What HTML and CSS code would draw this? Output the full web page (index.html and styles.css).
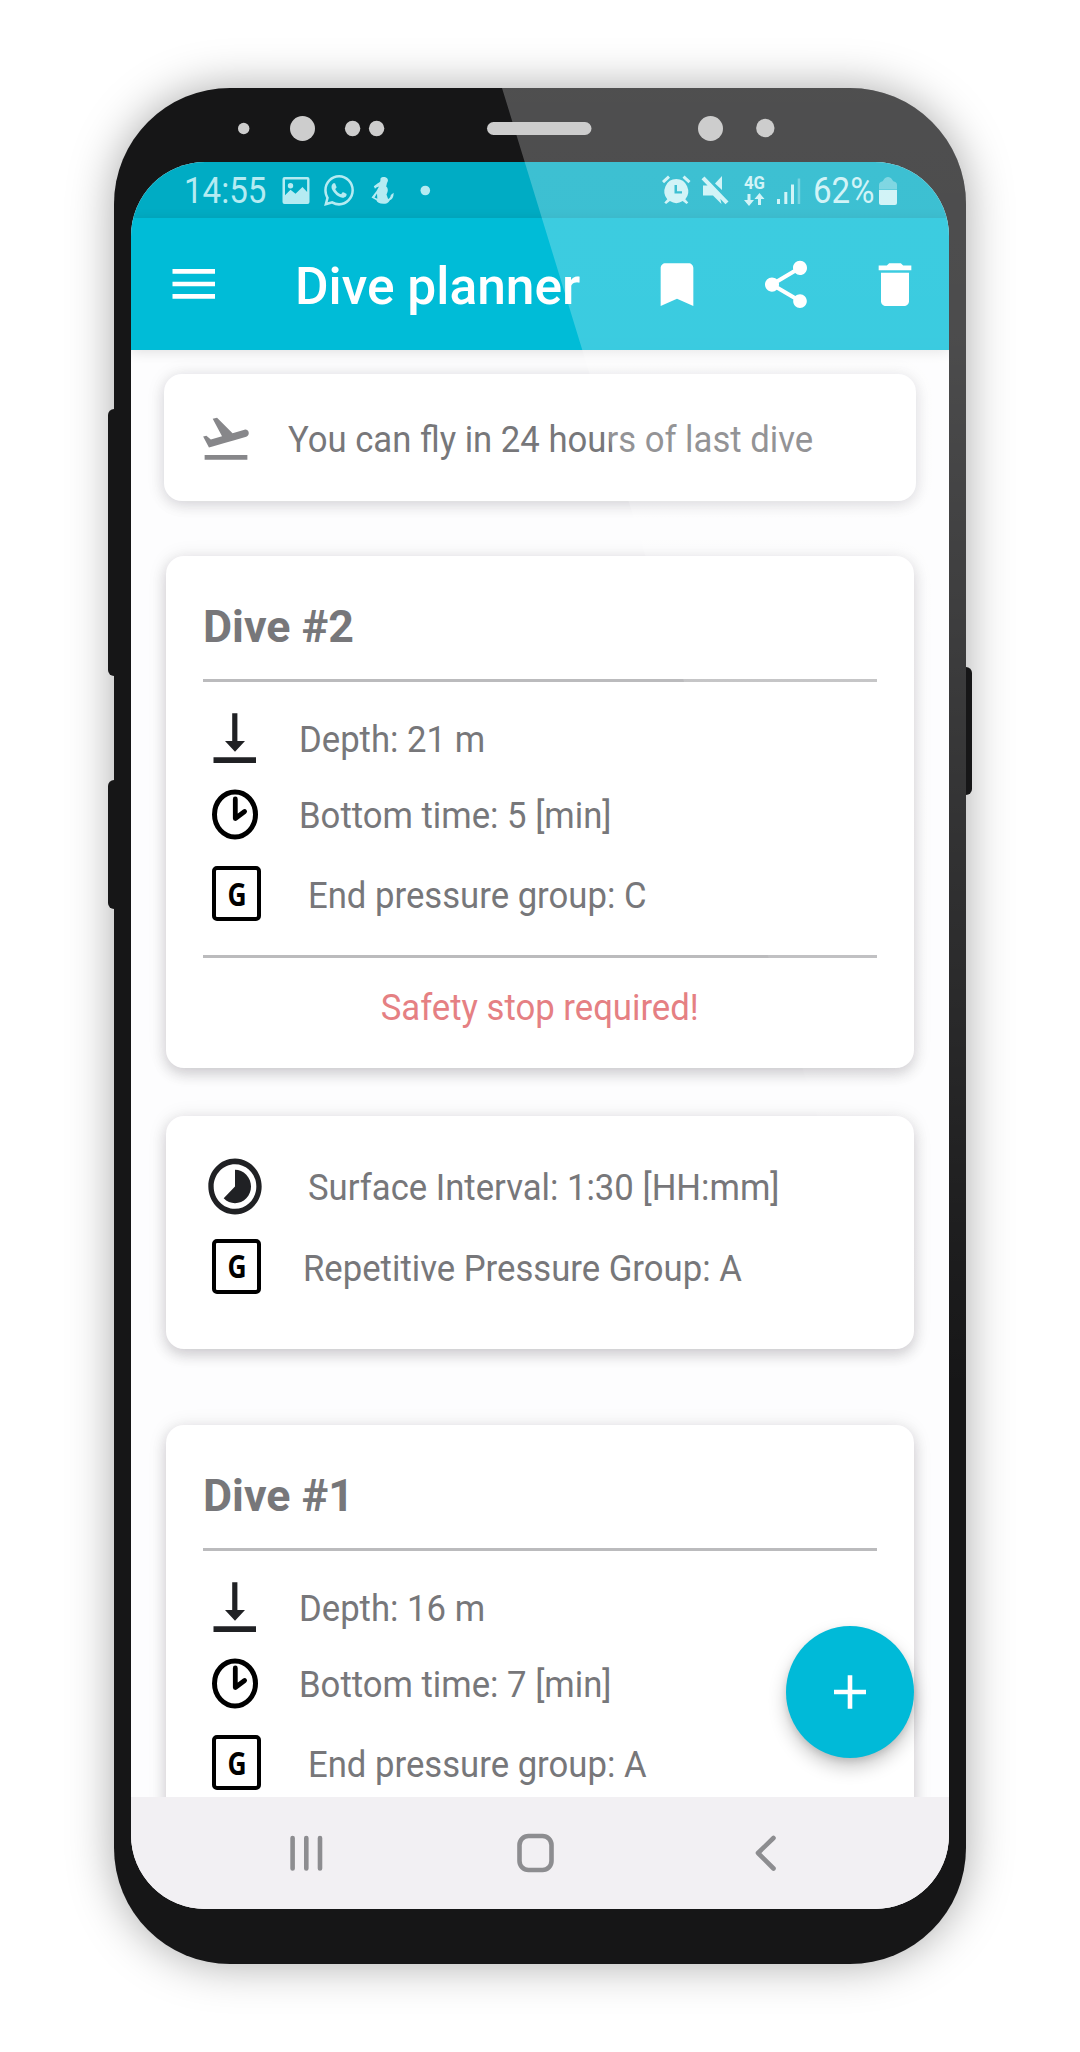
FILE: index.html
```html
<!DOCTYPE html>
<html lang="en">
<head>
<meta charset="utf-8">
<title>Dive planner</title>
<link rel="stylesheet" href="styles.css">
</head>
<body>
<svg class="defs" width="0" height="0" aria-hidden="true">
  <symbol id="depth" viewBox="203 708 64 60"><path fill="#202124" d="M232.2 713.3h5.2V741h7.6l-10 10.8-10-10.8h7.2zM213.5 757.3H256v5.7h-42.500z"/></symbol>
  <symbol id="clock" viewBox="203 783 64 60"><ellipse cx="235" cy="813.4" rx="20.500" ry="22.500" fill="none" stroke="#000" stroke-width="5"/><path d="M235.300 798v19.500l9.300-7" fill="none" stroke="#000" stroke-width="4.800" stroke-linecap="round" stroke-linejoin="round"/></symbol>
</svg>
<main class="phone">
  <i class="key volume"></i><i class="key assistant"></i><i class="key power"></i>
  <header class="sensors">
    <svg width="852" height="74" viewBox="114 88 852 74" fill="#cdcdcd"><circle cx="243.700" cy="128.500" r="5.700"/><circle cx="302.500" cy="128.500" r="12.500"/><circle cx="352.600" cy="128.500" r="7.700"/><circle cx="376.600" cy="128.500" r="7.700"/><rect x="487" y="122" width="104.500" height="13" rx="6.500"/><circle cx="710.500" cy="128.500" r="12.500"/><circle cx="765.300" cy="128" r="9.200"/></svg>
  </header>
  <div class="screen">
    <div class="statusbar">
      <span class="txt time">14:55</span>
      <svg class="st-icons-left" width="160" height="34" viewBox="282 173 160 34" fill="#b5ebf2">
        <path fill-rule="evenodd" d="M284.500 177h23a2 2 0 0 1 2 2v23a2 2 0 0 1-2 2h-23a2 2 0 0 1-2-2v-23a2 2 0 0 1 2-2zM285 179.500v15.800l5.500-5.500 5 4 7-6.800 4.600 5v-12.500zM290.500 183a2.700 2.700 0 1 1 0 5.400 2.700 2.700 0 0 1 0-5.400z"/>
        <g transform="translate(324 175) scale(1.25 1.290)"><path d="M17.472 14.382c-.297-.149-1.758-.867-2.03-.967-.273-.099-.471-.148-.67.15-.197.297-.767.966-.94 1.164-.173.199-.347.223-.644.075-.297-.15-1.255-.463-2.39-1.475-.883-.788-1.48-1.761-1.653-2.059-.173-.297-.018-.458.13-.606.134-.133.298-.347.446-.52.149-.174.198-.298.298-.497.099-.198.05-.371-.025-.52-.075-.149-.669-1.612-.916-2.207-.242-.579-.487-.5-.669-.51-.173-.008-.371-.01-.57-.01-.198 0-.52.074-.792.372-.272.297-1.04 1.016-1.04 2.479 0 1.462 1.065 2.875 1.213 3.074.149.198 2.096 3.2 5.077 4.487.709.306 1.262.489 1.694.625.712.227 1.36.195 1.871.118.571-.085 1.758-.719 2.006-1.413.248-.694.248-1.289.173-1.413-.074-.124-.272-.198-.57-.347m-5.421 7.403h-.004a9.87 9.87 0 01-5.031-1.378l-.361-.214-3.741.982.998-3.648-.235-.374a9.86 9.86 0 01-1.51-5.26c.001-5.45 4.436-9.884 9.888-9.884 2.64 0 5.122 1.03 6.988 2.898a9.825 9.825 0 012.893 6.994c-.003 5.45-4.437 9.884-9.885 9.884m8.413-18.297A11.815 11.815 0 0012.05 0C5.495 0 .16 5.335.157 11.892c0 2.096.547 4.142 1.588 5.945L.057 24l6.305-1.654a11.882 11.882 0 005.683 1.448h.005c6.554 0 11.89-5.335 11.893-11.893a11.821 11.821 0 00-3.48-8.413Z"/></g>
        <path d="M380.500 178.500c1.500-1.800 5.500-2 7 .3 1 1.600.2 3.200-.5 4.200l-.8 3.500c1.600 1.200 2 3.500 1.300 5.500l-1 2.500 1.600 4.500c1.500-.5 2.500-2 2.700-4l2.900-2.200-.3 3c-.5 2-1.500 3.600-3.500 4.500-1.500 3-4 3.500-6.500 3.500-4 0-6.300-1.200-7-3.500l-4.900-2.800 5-6.500 2.500-4.500c-1.500.5-3 1-4 2.300l-1.200-2.500 4-3c1.500-1 2.200-1.200 2.500-2zM377 193.500l-2.500 4 2.800 1.200z" fill-rule="evenodd"/>
        <circle cx="425.300" cy="190.500" r="4.800"/>
      </svg>
      <span class="spacer"></span>
      <svg class="st-icons-right" width="144" height="34" viewBox="659 173 144 34" fill="#c4f0f5">
        <path d="M661 181l6-5.500 2 2.200-6 5.500zM689.500 181l-6-5.500-2 2.200 6 5.500z"/>
        <path fill-rule="evenodd" d="M675.300 179a12 12.300 0 0 1 9 20.300l3 3.200-1.800 1.600-3.800-3a11.500 11.500 0 0 1-12.800 0l-3.800 3-1.800-1.600 3-3.200a12 12.300 0 0 1 9-20.300zm-1.800 6v8.500h7.500v-2.300h-5V185z"/>
        <path d="M702 185.500h6l11 12 1.500 6.500-8.500-8.500h-10zM721 176v14l-7-6.500zM703.500 176.500l24 25-3 2.700-24-25z"/>
        <path d="M746.500 194h3v6h3.500l-5 6-5-6h3.500zM757 205v-6h-3.500l5-6 5 6h-3.500v6z"/>
        <path d="M776 199h3v5h-3zM783.300 192h3v12h-3zM790 184.500h3V204h-3z"/><path opacity=".4" d="M796.700 178.500h2.500V204h-2.500z"/>
        <text class="net" x="743" y="189" textLength="21" lengthAdjust="spacingAndGlyphs">4G</text>
      </svg>
      <span class="txt battery">62%</span>
      <svg class="cell" width="20" height="30" viewBox="878 174 20 30" fill="#c4f0f5"><path opacity=".45" d="M879 188v-4c0-2 1-3 3-3.500 2-.5 2-4.500 6-4.500s4 4 6 4.500 3 1.500 3 3.500v4z"/><path d="M879 188.700h18V202a2 2 0 0 1-2 2h-14a2 2 0 0 1-2-2z"/></svg>
    </div>
    <nav class="appbar">
      <svg class="menu" width="44" height="32" viewBox="0 0 44 32" fill="#fff"><path d="M.5 1H43v4.700H.5zM.5 13.700H43v4.600H.5zM.5 26H43v4.700H.5z"/></svg>
      <h1 class="txt">Dive planner</h1>
      <span class="spacer"></span>
      <svg class="action" viewBox="0 0 24 24" preserveAspectRatio="none"><path d="M17 3H7c-1.100 0-2 .9-2 2v16l7-3 7 3V5c0-1.100-.9-2-2-2z"/></svg>
      <svg class="action" viewBox="0 0 24 24" preserveAspectRatio="none"><path d="M18 16.080c-.76 0-1.440.3-1.960.77L8.910 12.700c.05-.23.09-.46.09-.7s-.04-.47-.09-.7l7.050-4.110c.54.5 1.250.81 2.040.81 1.660 0 3-1.340 3-3s-1.340-3-3-3-3 1.340-3 3c0 .24.04.47.09.7L8.040 9.810C7.500 9.310 6.790 9 6 9c-1.660 0-3 1.340-3 3s1.340 3 3 3c.79 0 1.500-.31 2.040-.81l7.120 4.160c-.05.21-.08.43-.08.65 0 1.610 1.310 2.920 2.920 2.920s2.920-1.310 2.920-2.920-1.310-2.920-2.920-2.920z"/></svg>
      <svg class="action" viewBox="0 0 24 24" preserveAspectRatio="none"><path d="M6 19c0 1.100.9 2 2 2h8c1.100 0 2-.9 2-2V7H6v12zM19 4h-3.500l-1-1h-5l-1 1H5v2h14V4z"/></svg>
    </nav>
    <div class="content">
      <section class="card fly">
        <svg width="54" height="58" viewBox="0 0 24 24" preserveAspectRatio="none" fill="#87878a"><path d="M2.500 19h19v2h-19zM22.070 9.640c-.21-.8-1.040-1.280-1.840-1.060L14.920 10l-6.900-6.430-1.930.51 4.140 7.170-4.970 1.330-1.970-1.540-1.450.39 1.820 3.160.77 1.330 1.600-.43 5.310-1.420 4.350-1.160L21 11.490c.81-.23 1.280-1.050 1.070-1.850z"/></svg>
        <span class="txt">You can fly in 24 hours of last dive</span>
      </section>
      <section class="card dive">
        <h2><span class="txt">Dive #2</span></h2>
        <div class="rows">
          <div class="row"><svg width="64" height="60"><use href="#depth"/></svg><span class="txt">Depth: 21 m</span></div>
          <div class="row"><svg width="64" height="60"><use href="#clock"/></svg><span class="txt">Bottom time: 5 [min]</span></div>
          <div class="row group"><span class="gbox"><b class="txt">G</b></span><span class="txt label">End pressure group: C</span></div>
        </div>
        <p class="warning"><span class="txt">Safety stop required!</span></p>
      </section>
      <section class="card surface">
        <div class="row interval"><svg width="64" height="67" viewBox="0 0 24 24" preserveAspectRatio="none" fill="#202124"><path d="M16.240 7.760C15.070 6.590 13.540 6 12 6v6l-4.240 4.240c2.340 2.340 6.140 2.340 8.490 0 2.340-2.340 2.340-6.140-.01-8.480zM12 2C6.480 2 2 6.480 2 12s4.480 10 10 10 10-4.480 10-10S17.520 2 12 2zm0 18c-4.420 0-8-3.580-8-8s3.580-8 8-8 8 3.580 8 8-3.580 8-8 8z"/></svg><span class="txt">Surface Interval: 1:30 [HH:mm]</span></div>
        <div class="row group rep"><span class="gbox"><b class="txt">G</b></span><span class="txt label">Repetitive Pressure Group: A</span></div>
      </section>
      <section class="card dive last">
        <h2><span class="txt">Dive #1</span></h2>
        <div class="rows">
          <div class="row"><svg width="64" height="60"><use href="#depth"/></svg><span class="txt">Depth: 16 m</span></div>
          <div class="row"><svg width="64" height="60"><use href="#clock"/></svg><span class="txt">Bottom time: 7 [min]</span></div>
          <div class="row group"><span class="gbox"><b class="txt">G</b></span><span class="txt label">End pressure group: A</span></div>
        </div>
      </section>
      <button class="fab" aria-label="Add dive"><svg width="34" height="34" viewBox="0 0 34 34"><path d="M1 17h32M17 .3v33.400" stroke="#fff" stroke-width="4.600"/></svg></button>
    </div>
    <footer class="navbar">
      <svg width="33" height="38" viewBox="0 0 33 38"><path d="M2.600 4v30.500M16.300 4v30.500M30 4v30.500"/></svg>
      <svg width="37" height="40" viewBox="0 0 37 40"><rect x="2.500" y="3" width="32" height="34" rx="9"/></svg>
      <svg width="22" height="38" viewBox="0 0 22 38"><path d="M18.500 4L3 19l15.500 15.500" stroke-linejoin="round"/></svg>
    </footer>
  </div>
  <div class="glare"></div>
</main>
</body>
</html>
```
FILE: styles.css
```css
* { box-sizing: border-box; }
body { margin: 0; height: 2052px; overflow: hidden; background: #fff; font-family: Roboto, sans-serif; color: #77777a; }
h1, h2, p { margin: 0; }
.defs { position: absolute; }
.txt { display: inline-block; white-space: nowrap; transform: scaleX(.948); transform-origin: 0 50%; }
.spacer { flex: 1; }

.phone { position: relative; width: 852px; height: 1876px; margin: 88px 114px; border-radius: 116px; background: #161617; box-shadow: 0 0 46px rgba(0,0,0,.34); }
.sensors { height: 74px; position: relative; z-index: 3; }
.key { position: absolute; width: 8px; background: #161617; }
.volume { left: -6px; top: 321px; height: 267px; border-radius: 6px 0 0 6px; }
.assistant { left: -6px; top: 692px; height: 129px; border-radius: 6px 0 0 6px; }
.power { right: -6px; top: 579px; height: 128px; border-radius: 0 6px 6px 0; }
.glare { position: absolute; z-index: 2; inset: 0; border-radius: 116px; clip-path: polygon(388px 0, 100% 0, 100% 100%, 963px 100%); background: linear-gradient(rgba(255,255,255,.245) 0, rgba(255,255,255,.23) 250px, rgba(255,255,255,0) 1300px); pointer-events: none; }

.screen { width: 818px; height: 1747px; margin: 0 17px; border-radius: 74px; overflow: hidden; display: flex; flex-direction: column; background: #fdfdfe; }
.statusbar { height: 56px; flex: none; background: #00acc4; display: flex; align-items: center; padding-left: 53px; color: #b5ebf2; font-size: 36px; line-height: 42px; }
.statusbar svg { flex: none; }
.statusbar .txt { transform: scaleX(.92); margin-top: 2px; }
.time { width: 98px; }
.battery { width: 65px; color: #c4f0f5; }
.st-icons-right { margin-right: 9px; }
.cell { margin-right: 51px; }
.net { font: 700 18px Roboto, sans-serif; }
.appbar { height: 132px; flex: none; background: #00bcd7; display: flex; align-items: center; color: #fff; padding: 0 26px 0 41px; position: relative; z-index: 1; box-shadow: 0 2px 12px rgba(0,0,0,.12); }
.appbar h1 { font-size: 51.500px; font-weight: 500; margin: 6px 0 0 79px; line-height: 60px; transform: none; }
.action { flex: none; width: 56px; height: 57px; fill: #fff; margin-left: 53px; }

.content { flex: 1; min-height: 0; position: relative; overflow: hidden; padding: 24px 35px 0; }
.card { background: #fff; border-radius: 18px; box-shadow: 0 6px 14px rgba(30,25,35,.17), 0 1px 20px rgba(30,25,35,.09); font-size: 36.600px; line-height: 44px; margin: 0 0 48px; }
.fly { margin: 0 -2px 55px; height: 127px; display: flex; align-items: center; padding-left: 35px; box-shadow: 0 4px 14px rgba(30,25,35,.13), 0 1px 20px rgba(30,25,35,.08); }
.fly .txt { margin: 4px 0 0 35px; }
.dive { height: 512px; padding: 0 37px; }
.dive h2 { height: 126px; padding-top: 44px; border-bottom: 3px solid #bbbbbd; font-size: 45px; line-height: 54px; font-weight: 700; }
.dive h2 .txt { transform: scaleX(.995); }
.rows { padding: 19px 0 18px; }
.row { height: 76px; display: flex; align-items: center; }
.row svg { flex: none; margin-bottom: 3px; }
.row .txt { margin: 2px 0 0 31.500px; }
.group { height: 84px; }
.gbox { width: 49px; height: 55px; margin: 0 0 3px 9px; border: 4.500px solid #000; border-radius: 5px; flex: none; display: flex; align-items: center; justify-content: center; color: #000; }
.row .gbox .txt { margin: 0; font: 700 33px/36px "Noto Sans", sans-serif; transform: scaleX(.8); transform-origin: 50% 50%; }
.row.group .label { margin-left: 46.500px; }
.warning { border-top: 3px solid #bbbbbd; text-align: center; padding-top: 28px; color: #e58083; }
.warning .txt { transform-origin: 50% 50%; }
.surface { height: 233px; padding: 31px 37px 0; margin-bottom: 76px; }
.surface .row { height: 81px; }
.row.interval .txt { margin: 1px 0 0 41px; }
.row.rep .label { margin: 1px 0 0 42px; }
.rep .gbox { margin-bottom: 5px; }
.fab { position: absolute; right: 35px; top: 1276px; width: 128px; height: 132px; border: 0; padding: 0; border-radius: 50%; background: #00bad8; display: flex; align-items: center; justify-content: center; box-shadow: 0 9px 18px rgba(0,0,0,.22), 0 3px 6px rgba(0,0,0,.1); }
.navbar { height: 112px; flex: none; background: #f2f0f3; display: flex; align-items: center; padding-left: 159px; }
.navbar svg { flex: none; fill: none; stroke: #8d8d90; stroke-width: 4.600; stroke-linecap: round; margin-right: 194px; }
.navbar svg + svg { margin-right: 201px; }
```
